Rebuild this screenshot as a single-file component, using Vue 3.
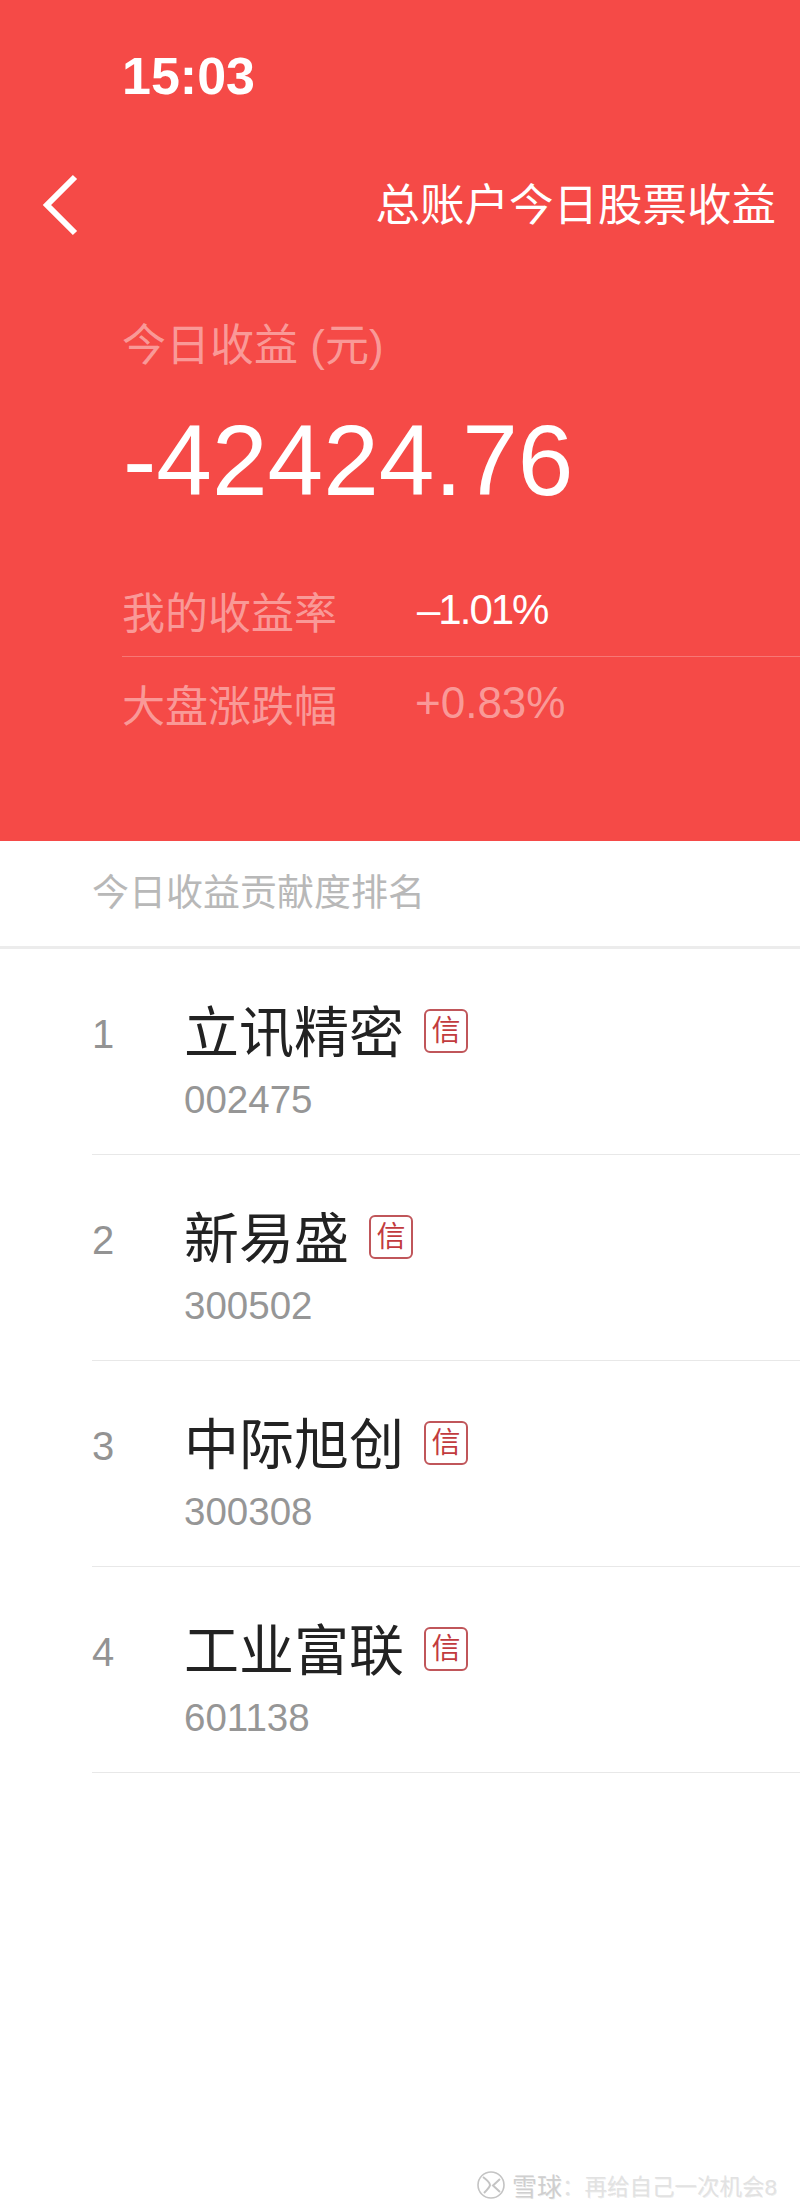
<script setup>
const stocks = [
  { rank: 1, name: '立讯精密', code: '002475' },
  { rank: 2, name: '新易盛', code: '300502' },
  { rank: 3, name: '中际旭创', code: '300308' },
  { rank: 4, name: '工业富联', code: '601138' },
];
</script>

<template>
  <div class="page">
    <header class="hero">
      <div class="time">15:03</div>
      <div class="nav">
        <svg class="back" width="40" height="64" viewBox="0 0 40 64" fill="none">
          <path d="M35 5 L7 33 L35 61" stroke="#fff" stroke-width="6" />
        </svg>
        <h1 class="nav-title">总账户今日股票收益</h1>
      </div>
      <div class="summary">
        <div class="label">今日收益 (元)</div>
        <div class="amount">-42424.76</div>
        <div class="rates">
          <div class="rate rate-first">
            <span class="rate-name">我的收益率</span>
            <span class="rate-value mine">–1.01%</span>
          </div>
          <div class="rate">
            <span class="rate-name">大盘涨跌幅</span>
            <span class="rate-value">+0.83%</span>
          </div>
        </div>
      </div>
    </header>

    <h2 class="section-title">今日收益贡献度排名</h2>

    <ul class="list">
      <li v-for="stock in stocks" :key="stock.code" class="item">
        <span class="rank">{{ stock.rank }}</span>
        <div class="info">
          <div class="name-row">
            <span class="name">{{ stock.name }}</span>
            <span class="badge">信</span>
          </div>
          <div class="code">{{ stock.code }}</div>
        </div>
      </li>
    </ul>

    <div class="watermark">
      <svg class="logo" width="30" height="30" viewBox="0 0 30 30" fill="none" stroke="#c4c4c4">
        <circle cx="15" cy="15" r="13" stroke-width="1.6" />
        <path d="M7 7 C11 10 14 13 14 15 C14 17 10 21 8 23" stroke-width="2" />
        <path d="M24 9 L17 15.5 L24 22" stroke-width="2" />
      </svg>
      <span class="wm-brand">雪球</span><span class="wm-text">：再给自己一次机会8</span>
    </div>
  </div>
</template>

<style scoped>
.page {
  position: relative;
  width: 800px;
  height: 2210px;
  overflow: hidden;
  background: #fff;
  font-family: "Liberation Sans", "Noto Sans CJK SC", sans-serif;
}

.hero {
  height: 841px;
  box-sizing: border-box;
  background: #f54a47;
  color: #fff;
  padding-top: 46px;
}

.time {
  padding-left: 122px;
  font-size: 52px;
  line-height: 60px;
  font-weight: 700;
}

.nav {
  display: flex;
  align-items: center;
  justify-content: space-between;
  margin-top: 66px;
  padding: 0 24px 0 40px;
  height: 64px;
}

.nav-title {
  margin: 0 0 5px;
  font-size: 44.5px;
  font-weight: 400;
}

.summary {
  padding-left: 122px;
}

.label {
  margin-top: 82px;
  font-size: 44px;
  line-height: 56px;
  color: rgba(255, 255, 255, 0.45);
}

.amount {
  margin-top: 31px;
  padding-left: 1px;
  font-size: 100px;
  line-height: 110px;
}

.rates {
  margin-top: 49px;
}

.rate {
  display: flex;
  align-items: center;
  height: 92px;
}

.rate-first {
  border-bottom: 1px solid rgba(255, 255, 255, 0.25);
}

.rate-name {
  width: 293px;
  font-size: 43px;
  color: rgba(255, 255, 255, 0.45);
}

.rate-value {
  font-size: 44px;
  color: rgba(255, 255, 255, 0.45);
}

.mine {
  margin-left: 2px;
  font-size: 42px;
  letter-spacing: -2px;
  color: #fff;
}

.section-title {
  margin: 0;
  height: 105px;
  padding-left: 92px;
  border-bottom: 3px solid #ececec;
  font-size: 37px;
  line-height: 105px;
  font-weight: 400;
  color: #b8b8b8;
}

.list {
  list-style: none;
  margin: 0;
  padding: 0 0 0 92px;
}

.item {
  display: flex;
  height: 205px;
  border-bottom: 1px solid #e8e8e8;
}

.rank {
  width: 92px;
  padding-top: 60px;
  font-size: 40px;
  line-height: 50px;
  color: #939393;
}

.name-row {
  display: flex;
  align-items: center;
  gap: 20px;
  margin-top: 51px;
  height: 66px;
}

.name {
  font-size: 55px;
  line-height: 66px;
  color: #222;
}

.badge {
  width: 40px;
  height: 40px;
  margin-bottom: 4px;
  display: flex;
  align-items: center;
  justify-content: center;
  border: 2px solid #c0565a;
  border-radius: 6px;
  font-size: 29px;
  line-height: 1;
  color: #c23b3e;
}

.code {
  margin-top: 12px;
  font-size: 38.5px;
  line-height: 44px;
  color: #969696;
}

.watermark {
  position: absolute;
  left: 476px;
  top: 2167px;
  display: flex;
  align-items: center;
  height: 36px;
  white-space: nowrap;
  font-size: 22.5px;
  text-shadow: 1px 1px 0 rgba(0, 0, 0, 0.06);
}

.logo {
  margin-right: 6px;
}

.wm-brand {
  font-size: 25px;
  color: #cfcfcf;
}

.wm-text {
  color: #e2e2e2;
}
</style>
